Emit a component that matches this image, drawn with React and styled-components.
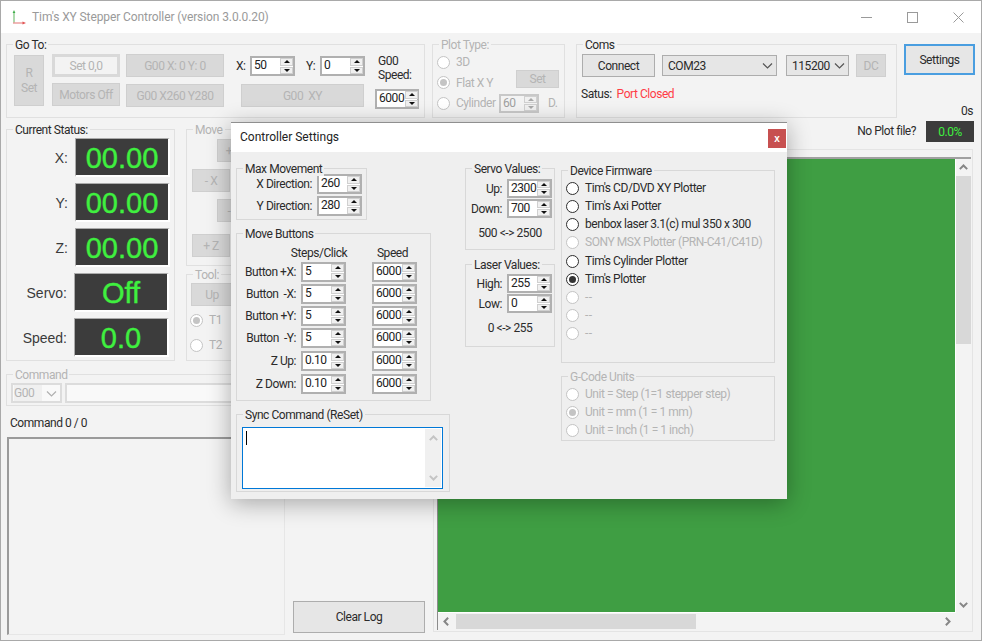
import React from "react";
import styled, { createGlobalStyle } from "styled-components";

const GlobalStyle = createGlobalStyle`
  html, body { margin: 0; padding: 0; background: #fff; }
  body { font-family: Roboto, "Liberation Sans", Arial, sans-serif; font-size: 12px; letter-spacing: -0.45px; color: #2b2b2b; overflow: hidden; }
  * { box-sizing: border-box; }
`;

const MUTED = "#b4b4b4";

const Win = styled.div`
  position: relative;
  width: 982px;
  height: 641px;
  border: 1px solid #a9a9a9;
  background: #f3f3f3;
  overflow: hidden;
`;

const TitleBar = styled.div`
  height: 32px;
  background: #fff;
  display: flex;
  align-items: center;
  padding-left: 9px;
  gap: 6px;
  color: #9a9a9a;
  letter-spacing: -0.1px;
`;

const WinButtons = styled.div`
  margin-left: auto;
  display: flex;
  align-items: center;
  gap: 35px;
  padding-right: 17px;
`;

const TopRow = styled.div`
  display: flex;
  padding: 11px 0 0 5px;
  height: 85px;
`;

const Group = styled.div`
  position: relative;
  flex: none;
  width: ${(p) => p.$w}px;
  height: ${(p) => p.$h}px;
  margin-left: ${(p) => p.$ml || 0}px;
  margin-top: ${(p) => p.$mt || 0}px;
  border: 1px solid ${(p) => p.$line || "#e0e0e0"};
`;

const GroupTitle = styled.span`
  position: absolute;
  top: -7px;
  left: 6px;
  padding: 0 2px;
  line-height: 14px;
  background: ${(p) => p.$bg || "#f3f3f3"};
  color: ${(p) => (p.$off ? MUTED : "#2b2b2b")};
  white-space: nowrap;
`;

const Btn = styled.div`
  flex: none;
  display: flex;
  align-items: center;
  justify-content: center;
  text-align: center;
  padding-top: 1px;
  width: ${(p) => p.$w}px;
  height: ${(p) => p.$h || 23}px;
  margin-left: ${(p) => p.$ml || 0}px;
  margin-top: ${(p) => p.$mt || 0}px;
  background: ${(p) => (p.$on ? "#e6e6e6" : "#d9d9d9")};
  border: 1px solid ${(p) => (p.$on ? "#adadad" : "#cfcfcf")};
  color: ${(p) => (p.$on ? "#2b2b2b" : MUTED)};
  line-height: 15px;
  white-space: nowrap;
`;

const GhostBtn = styled(Btn)`
  background: #f3f3f3;
  border: 3px solid #d9d9d9;
`;

// only the first glyph of these two sticks out from under the dialog
const PeekBtn = styled(Btn)`
  padding-right: 14px;
`;

const SettingsBtn = styled(Btn)`
  background: #e6e6e6;
  border: 2px solid #4a9ee0;
  color: #2b2b2b;
  margin-right: -2px;
`;

const Column = styled.div`
  display: flex;
  flex-direction: column;
  flex: none;
  width: ${(p) => (p.$w ? `${p.$w}px` : "auto")};
  margin-left: ${(p) => p.$ml || 0}px;
  gap: ${(p) => p.$gap || 0}px;
`;

const Row = styled.div`
  display: flex;
  align-items: center;
  gap: ${(p) => p.$gap || 0}px;
  margin-top: ${(p) => p.$mt || 0}px;
  padding-left: ${(p) => p.$pl || 0}px;
`;

const GoToBody = styled.div`
  display: flex;
  padding: 9px 0 0 7px;
`;

const Text = styled.span`
  color: ${(p) => p.$color || "inherit"};
  margin-left: ${(p) => p.$ml || 0}px;
  white-space: nowrap;
`;

const LabelBox = styled(Text)`
  flex: none;
  width: ${(p) => p.$w}px;
`;

const Dashes = styled.span`
  letter-spacing: 0.5px;
`;

const SpinBox = styled.div`
  flex: none;
  display: flex;
  width: ${(p) => p.$w || 45}px;
  height: ${(p) => p.$h || 20}px;
  margin-left: ${(p) => p.$ml || 0}px;
  margin-top: ${(p) => p.$mt || 0}px;
  background: ${(p) => (p.$off ? "#f3f3f3" : "#fff")};
  border: 2px solid ${(p) => (p.$off ? "#c8c8c8" : "#b0b0b0")};
  color: ${(p) => (p.$off ? "#a0a0a0" : "#222")};
`;

const SpinValue = styled.span`
  flex: 1;
  padding: 0 0 0 2px;
  line-height: 14px;
`;

const SpinArrows = styled.div`
  flex: none;
  width: 14px;
  padding-left: 1px;
  display: flex;
  flex-direction: column;
  gap: 1px;
`;

const SpinArrow = styled.div`
  flex: 1;
  display: flex;
  align-items: center;
  justify-content: center;
  background: #f0f0f0;
  border: 1px solid #d0d0d0;
  &::after {
    content: "";
    border-left: 3.5px solid transparent;
    border-right: 3.5px solid transparent;
    ${(p) => (p.$down ? "border-top" : "border-bottom")}: 3.5px solid ${(p) => (p.$off ? "#a8a8a8" : "#111")};
  }
`;

const Spin = ({ value, w, h, off, ml, mt }) => (
  <SpinBox $w={w} $h={h} $off={off} $ml={ml} $mt={mt}>
    <SpinValue>{value}</SpinValue>
    <SpinArrows>
      <SpinArrow $off={off} />
      <SpinArrow $off={off} $down />
    </SpinArrows>
  </SpinBox>
);

const RadioRow = styled.div`
  flex: none;
  display: flex;
  align-items: center;
  width: ${(p) => (p.$w ? `${p.$w}px` : "auto")};
  height: ${(p) => p.$h || 18}px;
  margin-top: ${(p) => p.$mt || 0}px;
  gap: 6px;
  color: ${(p) => (p.$off ? MUTED : "#2b2b2b")};
  white-space: nowrap;
`;

const Dot = styled.span`
  flex: none;
  width: 13px;
  height: 13px;
  border-radius: 50%;
  background: #fff;
  border: ${(p) => (p.$off ? "1px solid #c4c4c4" : "1.5px solid #2e2e2e")};
  display: flex;
  align-items: center;
  justify-content: center;
  &::after {
    content: "";
    display: ${(p) => (p.$checked ? "block" : "none")};
    width: 7px;
    height: 7px;
    border-radius: 50%;
    background: ${(p) => (p.$off ? "#c4c4c4" : "#333")};
  }
`;

const Radio = ({ label, off, checked, h, mt, w }) => (
  <RadioRow $off={off} $h={h} $mt={mt} $w={w}>
    <Dot $off={off} $checked={checked} />
    {label}
  </RadioRow>
);

const Chevron = ({ color = "#555", size = 11, width = 1.2, up, left, right }) => {
  const rotate = up ? 180 : left ? 90 : right ? -90 : 0;
  return (
    <svg width={size} height={size} viewBox="0 0 11 11" style={{ transform: `rotate(${rotate}deg)`, flex: "none" }}>
      <path d="M1 3.5 L5.5 8 L10 3.5" fill="none" stroke={color} strokeWidth={width} />
    </svg>
  );
};

const ScrollChevron = (props) => <Chevron size={9} width={2.4} color="#868686" {...props} />;

const Combo = styled.div`
  flex: none;
  display: flex;
  align-items: center;
  justify-content: space-between;
  width: ${(p) => p.$w}px;
  height: ${(p) => p.$h || 21}px;
  margin-left: ${(p) => p.$ml || 0}px;
  padding: ${(p) => (p.$off ? "0 3px 0 1px" : "0 3px 0 5px")};
  background: ${(p) => (p.$off ? "#f9f9f9" : "#e6e6e6")};
  border: ${(p) => (p.$off ? "2px solid #dcdcdc" : "1px solid #adadad")};
  color: ${(p) => (p.$off ? MUTED : "#2b2b2b")};
`;

const ComboValue = styled.span`
  padding: 1px 8px 1px 0;
  background: #f0f0f0;
`;

const PlotBody = styled.div`
  display: flex;
  flex-direction: column;
  padding: 7px 0 0 4px;
`;

const SettingsColumn = styled.div`
  display: flex;
  flex-direction: column;
  align-items: flex-end;
  justify-content: space-between;
  width: 71px;
  height: 74px;
  margin-left: 7px;
  padding-right: 2px;
`;

const Content = styled.div`
  display: flex;
  padding-left: 5px;
  height: 522px;
`;

const LeftColumn = styled.div`
  flex: none;
  width: 279px;
  padding-top: 11px;
`;

const StatusRows = styled.div`
  display: flex;
  flex-direction: column;
  gap: 6px;
  padding-top: 8px;
`;

const StatusRow = styled.div`
  display: flex;
  align-items: center;
  justify-content: flex-end;
  padding-right: ${(p) => p.$pr || 4}px;
  gap: 7px;
`;

const StatusLabel = styled.span`
  font-family: "Liberation Sans", Arial, sans-serif;
  font-size: 14px;
  letter-spacing: 0;
  color: #3a3a3a;
`;

const Readout = styled.div`
  flex: none;
  width: 95px;
  height: 39px;
  display: flex;
  align-items: center;
  justify-content: center;
  background: #3c3c3c;
  border-style: solid;
  border-width: 1px 2px 2px 1px;
  border-color: #ababab #fff #fff #ababab;
  color: #3ff03f;
  font-family: "Liberation Sans", Arial, sans-serif;
  font-size: 29px;
  letter-spacing: 0;
  padding-top: 2px;
  -webkit-text-stroke: 0.4px #3ff03f;
`;

const CommandLabel = styled.div`
  margin: 10px 0 0 4px;
  line-height: 14px;
`;

const LogList = styled.div`
  width: 278px;
  height: 198px;
  margin: 7px 0 0 1px;
  border-style: solid;
  border-width: 2px 1px 1px 2px;
  border-color: #9a9a9a #e6e6e6 #e6e6e6 #9a9a9a;
`;

const MiddleColumn = styled.div`
  flex: none;
  width: 132px;
  margin-left: 8px;
  display: flex;
  align-items: flex-end;
  padding-bottom: 7px;
`;

const RightColumn = styled.div`
  flex: none;
  width: 540px;
  margin-left: 8px;
`;

const FileRow = styled.div`
  height: 31px;
  display: flex;
  justify-content: flex-end;
  align-items: flex-start;
  padding-top: 3px;
`;

const Percent = styled.div`
  width: 48px;
  height: 21px;
  margin: 0 -1px 0 10px;
  background: #3c3c3c;
  color: #3ff03f;
  display: flex;
  align-items: center;
  justify-content: center;
`;

const FileHint = styled.span`
  line-height: 21px;
`;

const PlotPanel = styled.div`
  height: 483px;
  border: 1px solid #e4e4e4;
  padding: 7px 1px 1px 3px;
`;

const PlotFrame = styled.div`
  height: 100%;
  display: grid;
  grid-template-columns: 518px 1fr;
  grid-template-rows: 1fr 17px;
  border-top: 2px solid #a0a0a0;
  border-left: 1px solid #8c8c8c;
`;

const Canvas = styled.div`
  background: #3f9e43;
  border-right: 1px solid #fff;
  border-bottom: 1px solid #fff;
`;

const VScroll = styled.div`
  display: flex;
  flex-direction: column;
  align-items: center;
  justify-content: space-between;
  padding: 4px 0;
`;

const VThumb = styled.div`
  width: 15px;
  height: 168px;
  margin-top: 4px;
  margin-bottom: auto;
  background: #d8d8d8;
`;

const HScroll = styled.div`
  display: flex;
  align-items: center;
  padding: 0 4px 0 4px;
`;

const HThumb = styled.div`
  width: 240px;
  height: 15px;
  margin-left: 5px;
  margin-right: auto;
  background: #d8d8d8;
`;

const Dialog = styled.div`
  position: absolute;
  left: 230px;
  top: 121px;
  width: 556px;
  height: 377px;
  background: #efefef;
  box-shadow: 0 4px 22px rgba(0, 0, 0, 0.32);
  border-top: 1px solid #8f8f8f;
`;

const DialogHead = styled.div`
  position: relative;
  height: 29px;
  display: flex;
  align-items: center;
  padding: 0 0 2px 9px;
  background: #fff;
  color: #222;
  letter-spacing: 0;
`;

const CloseBox = styled.div`
  position: absolute;
  top: 6px;
  right: 1px;
  width: 18px;
  height: 19px;
  background: #c75050;
  color: #fff;
  font-family: "Liberation Sans", Arial, sans-serif;
  font-weight: 700;
  font-size: 10px;
  display: flex;
  align-items: center;
  justify-content: center;
`;

const DialogBody = styled.div`
  display: flex;
  padding: 16px 0 0 5px;
`;

const DialogColumn = styled.div`
  flex: none;
  width: ${(p) => p.$w}px;
  margin-left: ${(p) => p.$ml || 0}px;
  display: flex;
  flex-direction: column;
  gap: ${(p) => p.$gap}px;
  padding-top: ${(p) => p.$pt || 0}px;
`;

const FieldRow = styled.div`
  display: flex;
  align-items: center;
  justify-content: flex-end;
  gap: 5px;
  margin-top: ${(p) => p.$mt || 0}px;
  padding-right: ${(p) => p.$pr || 0}px;
`;

const RangeNote = styled.div`
  text-align: center;
  margin-top: ${(p) => p.$mt || 8}px;
  line-height: 14px;
`;

const MoveGrid = styled.div`
  display: flex;
  flex-direction: column;
  gap: 2px;
  padding-top: 12px;
`;

const MoveRow = styled.div`
  display: flex;
  align-items: center;
  margin-top: ${(p) => p.$mt || 0}px;
  height: ${(p) => p.$h || 20}px;
`;

const MoveLabel = styled.span`
  flex: none;
  width: 59px;
  margin-right: 5px;
  text-align: right;
  white-space: pre;
`;

const MoveHead = styled.span`
  flex: none;
  width: ${(p) => p.$w}px;
  margin-left: ${(p) => p.$ml || 0}px;
  text-align: center;
`;

const SyncBox = styled.div`
  display: flex;
  width: 201px;
  height: 62px;
  margin: 12px 0 0 5px;
  background: #fff;
  border: 1px solid #0078d7;
  padding: 1px 1px 1px 3px;
`;

const Caret = styled.span`
  display: block;
  width: 1px;
  height: 14px;
  margin-top: 2px;
  background: #000;
`;

const SyncScroll = styled.div`
  margin-left: auto;
  width: 16px;
  display: flex;
  flex-direction: column;
  align-items: center;
  justify-content: space-between;
  background: #f0f0f0;
  padding: 5px 0;
`;

const Firmware = styled.div`
  padding: 8px 0 0 4px;
`;

const moveRows = [
  { label: "Button +X:", steps: "5" },
  { label: "Button  -X:", steps: "5" },
  { label: "Button +Y:", steps: "5" },
  { label: "Button  -Y:", steps: "5" },
  { label: "Z Up:", steps: "0.10", mt: 1 },
  { label: "Z Down:", steps: "0.10", mt: 1 },
];

const firmware = [
  { label: "Tim's CD/DVD XY Plotter" },
  { label: "Tim's Axi Potter" },
  { label: "benbox laser 3.1(c) mul 350 x 300" },
  { label: "SONY MSX Plotter (PRN-C41/C41D)", off: true },
  { label: "Tim's Cylinder Plotter", mt: 1 },
  { label: "Tim's Plotter", checked: true },
  { label: <Dashes>--</Dashes>, off: true },
  { label: <Dashes>--</Dashes>, off: true },
  { label: <Dashes>--</Dashes>, off: true },
];

const readouts = [
  { label: "X:", value: "00.00" },
  { label: "Y:", value: "00.00" },
  { label: "Z:", value: "00.00" },
  { label: "Servo:", value: "Off", pr: 5 },
  { label: "Speed:", value: "0.0", pr: 5 },
];

const AppIcon = () => (
  <svg width="16" height="16" viewBox="0 0 16 16">
    <path d="M4 14 V3" stroke="#8cc98c" strokeWidth="1.4" fill="none" />
    <path d="M2.6 4 L4 1 L5.4 4 Z" fill="#3fae4a" />
    <path d="M3 14 H14" stroke="#eb9a9a" strokeWidth="1.4" fill="none" />
    <path d="M12.5 12.6 L16 14 L12.5 15.4 Z" fill="#e25555" />
  </svg>
);

const WinControls = () => (
  <WinButtons>
    <svg width="11" height="11" viewBox="0 0 11 11">
      <path d="M0 5.5 H11" stroke="#9a9a9a" />
    </svg>
    <svg width="11" height="11" viewBox="0 0 11 11">
      <rect x="0.5" y="0.5" width="10" height="10" fill="none" stroke="#9a9a9a" />
    </svg>
    <svg width="11" height="11" viewBox="0 0 11 11">
      <path d="M0.5 0.5 L10.5 10.5 M10.5 0.5 L0.5 10.5" stroke="#9a9a9a" />
    </svg>
  </WinButtons>
);

const App = () => (
  <>
    <GlobalStyle />
    <Win>
      <TitleBar>
        <AppIcon />
        Tim's XY Stepper Controller (version 3.0.0.20)
        <WinControls />
      </TitleBar>

      <TopRow>
        <Group $w={419} $h={74}>
          <GroupTitle>Go To:</GroupTitle>
          <GoToBody>
            <Btn $w={30} $h={51} $mt={1}>R<br />Set</Btn>
            <Column $w={68} $ml={8} $gap={6}>
              <GhostBtn $w={68}>Set 0,0</GhostBtn>
              <Btn $w={68}>Motors Off</Btn>
            </Column>
            <Column $w={98} $ml={6} $gap={7}>
              <Btn $w={98}>G00 X: 0 Y: 0</Btn>
              <Btn $w={98}>G00 X260 Y280</Btn>
            </Column>
            <Column $w={129} $ml={12} $gap={8}>
              <Row $mt={2}>
                <LabelBox $w={14}>X:</LabelBox>
                <Spin value="50" />
                <LabelBox $w={14} $ml={11}>Y:</LabelBox>
                <Spin value="0" />
              </Row>
              <Btn $w={123} $ml={5}>G00 &nbsp;XY</Btn>
            </Column>
            <Column $w={44} $ml={10}>
              <Text $ml={3}>G00</Text>
              <Text $ml={3}>Speed:</Text>
              <Spin value="6000" w={44} mt={7} />
            </Column>
          </GoToBody>
        </Group>

        <Group $w={133} $h={74} $ml={7}>
          <GroupTitle $off>Plot Type:</GroupTitle>
          <PlotBody>
            <Radio label="3D" off h={20} />
            <Row>
              <Radio label="Flat X Y" off checked h={21} w={79} />
              <Btn $w={43} $h={18} $mt={-8}>Set</Btn>
            </Row>
            <Row>
              <Radio label="Cylinder" off h={20} w={62} />
              <Spin value="60" off w={40} h={19} />
              <Text $color={MUTED} $ml={9}>D.</Text>
            </Row>
          </PlotBody>
        </Group>

        <Group $w={321} $h={74} $ml={11}>
          <GroupTitle>Coms</GroupTitle>
          <Row $mt={9} $pl={5}>
            <Btn $on $w={73}>Connect</Btn>
            <Combo $w={115} $ml={7}>COM23<Chevron /></Combo>
            <Combo $w={63} $ml={9}>115200<Chevron /></Combo>
            <Btn $w={30} $ml={7}>DC</Btn>
          </Row>
          <Row $mt={10} $pl={4}>
            <Text>Satus:</Text>
            <Text $color="#ff3c46" $ml={5}>Port Closed</Text>
          </Row>
        </Group>

        <SettingsColumn>
          <SettingsBtn $w={71} $h={31}>Settings</SettingsBtn>
          <Text>0s</Text>
        </SettingsColumn>
      </TopRow>

      <Content>
        <LeftColumn>
          <Row>
            <Group $w={169} $h={232}>
              <GroupTitle>Current Status:</GroupTitle>
              <StatusRows>
                {readouts.map((r) => (
                  <StatusRow key={r.label} $pr={r.pr}>
                    <StatusLabel>{r.label}</StatusLabel>
                    <Readout>{r.value}</Readout>
                  </StatusRow>
                ))}
              </StatusRows>
            </Group>
            <Column $w={99} $ml={11} $gap={8}>
              <Group $w={99} $h={137}>
                <GroupTitle $off>Move</GroupTitle>
                <Column $gap={7}>
                  <Row $mt={9} $pl={30}><PeekBtn $w={38}>+</PeekBtn></Row>
                  <Row $pl={5} $gap={12}><Btn $w={38}>- X</Btn><Btn $w={38} /></Row>
                  <Row $pl={30}><PeekBtn $w={38}>-</PeekBtn></Row>
                  <Row $mt={5} $pl={5} $gap={12}><Btn $w={38}>+ Z</Btn><Btn $w={38} /></Row>
                </Column>
              </Group>
              <Group $w={99} $h={87}>
                <GroupTitle $off>Tool:</GroupTitle>
                <Row $mt={8} $pl={4}><Btn $w={42}>Up</Btn><Btn $w={42} $ml={4} /></Row>
                <Column $gap={7}>
                  <Row $mt={5} $pl={3}><Radio label="T1" off checked /></Row>
                  <Row $pl={3}><Radio label="T2" off /></Row>
                </Column>
              </Group>
            </Column>
          </Row>

          <Group $w={279} $h={32} $mt={13}>
            <GroupTitle $off>Command</GroupTitle>
            <Row $mt={8} $pl={4} $gap={3}>
              <Combo $w={51} $h={20} $off><ComboValue>G00</ComboValue><Chevron color="#b0b0b0" /></Combo>
              <Combo $w={214} $h={20} $off />
            </Row>
          </Group>
          <CommandLabel>Command 0 / 0</CommandLabel>
          <LogList />
        </LeftColumn>

        <MiddleColumn>
          <Btn $on $w={132} $h={32}>Clear Log</Btn>
        </MiddleColumn>

        <RightColumn>
          <FileRow>
            <FileHint>No Plot file?</FileHint>
            <Percent>0.0%</Percent>
          </FileRow>
          <PlotPanel>
            <PlotFrame>
              <Canvas />
              <VScroll>
                <ScrollChevron up />
                <VThumb />
                <ScrollChevron />
              </VScroll>
              <HScroll>
                <ScrollChevron left />
                <HThumb />
                <ScrollChevron right />
              </HScroll>
            </PlotFrame>
          </PlotPanel>
        </RightColumn>
      </Content>

      <Dialog>
        <DialogHead>
          Controller Settings
          <CloseBox>x</CloseBox>
        </DialogHead>
        <DialogBody>
          <DialogColumn $w={214} $gap={13}>
            <Group $w={131} $h={52} $line="#d8d8d8">
              <GroupTitle $bg="#efefef">Max Movement</GroupTitle>
              <FieldRow $mt={5} $pr={4}>X Direction: <Spin value="260" /></FieldRow>
              <FieldRow $mt={2} $pr={4}>Y Direction: <Spin value="280" /></FieldRow>
            </Group>
            <Group $w={195} $h={168} $line="#d8d8d8">
              <GroupTitle $bg="#efefef">Move Buttons</GroupTitle>
              <MoveGrid>
                <MoveRow $h={14}>
                  <MoveHead $w={60} $ml={52}>Steps/Click</MoveHead>
                  <MoveHead $w={45} $ml={21}>Speed</MoveHead>
                </MoveRow>
                {moveRows.map((r) => (
                  <MoveRow key={r.label} $mt={r.mt}>
                    <MoveLabel>{r.label}</MoveLabel>
                    <Spin value={r.steps} />
                    <Spin value="6000" ml={26} />
                  </MoveRow>
                ))}
              </MoveGrid>
            </Group>
            <Group $w={214} $h={78} $line="#d8d8d8">
              <GroupTitle $bg="#efefef">Sync Command (ReSet)</GroupTitle>
              <SyncBox>
                <Caret />
                <SyncScroll>
                  <ScrollChevron up color="#c4c4c4" />
                  <ScrollChevron color="#c4c4c4" />
                </SyncScroll>
              </SyncBox>
            </Group>
          </DialogColumn>

          <DialogColumn $w={90} $ml={15} $gap={14}>
            <Group $w={90} $h={82} $line="#d8d8d8">
              <GroupTitle $bg="#efefef">Servo Values:</GroupTitle>
              <FieldRow $mt={10} $pr={2}>Up: <Spin value="2300" h={19} /></FieldRow>
              <FieldRow $mt={1} $pr={2}>Down: <Spin value="700" h={19} /></FieldRow>
              <RangeNote>500 &lt;-&gt; 2500</RangeNote>
            </Group>
            <Group $w={90} $h={83} $line="#d8d8d8">
              <GroupTitle $bg="#efefef">Laser Values:</GroupTitle>
              <FieldRow $mt={9} $pr={2}>High: <Spin value="255" h={19} /></FieldRow>
              <FieldRow $mt={1} $pr={2}>Low: <Spin value="0" h={19} /></FieldRow>
              <RangeNote>0 &lt;-&gt; 255</RangeNote>
            </Group>
          </DialogColumn>

          <DialogColumn $w={214} $ml={6} $gap={13} $pt={2}>
            <Group $w={214} $h={193} $line="#d8d8d8">
              <GroupTitle $bg="#efefef">Device Firmware</GroupTitle>
              <Firmware>
                {firmware.map((f, i) => (
                  <Radio key={i} label={f.label} off={f.off} checked={f.checked} mt={f.mt} />
                ))}
              </Firmware>
            </Group>
            <Group $w={214} $h={65} $line="#d8d8d8">
              <GroupTitle $off $bg="#efefef">G-Code Units</GroupTitle>
              <Firmware>
                <Radio label="Unit = Step (1=1 stepper step)" off />
                <Radio label="Unit = mm (1 = 1 mm)" off checked />
                <Radio label="Unit = Inch (1 = 1 inch)" off />
              </Firmware>
            </Group>
          </DialogColumn>
        </DialogBody>
      </Dialog>
    </Win>
  </>
);

export default App;
